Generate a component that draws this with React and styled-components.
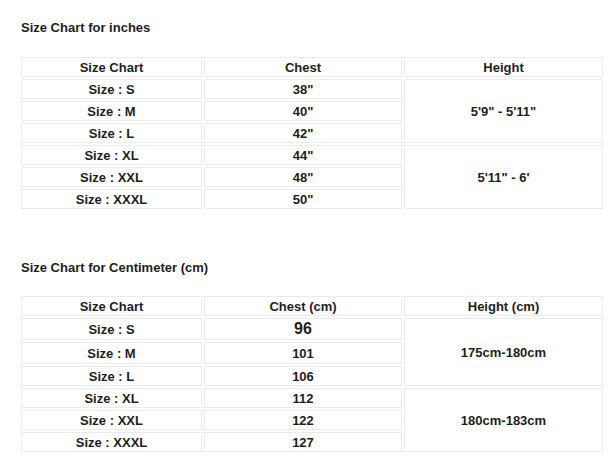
import React from "react";
import styled, { createGlobalStyle } from "styled-components";

const Global = createGlobalStyle`
  html, body { margin: 0; padding: 0; background: #fff; }
  body { font-family: "Liberation Sans", Arial, sans-serif; color: #1e1e1e; }
`;

const Page = styled.div`
  padding: 20px 0 0 21px;
  display: flex;
  flex-direction: column;
`;

const Section = styled.section`
  display: flex;
  flex-direction: column;
  margin-bottom: ${(p) => p.$mb || 0}px;
`;

const Title = styled.h2`
  margin: 0 0 ${(p) => p.$gap}px 0;
  font-size: 13px;
  font-weight: bold;
  line-height: 16px;
  color: #1e1e1e;
`;

const Table = styled.div`
  display: grid;
  grid-template-columns: 181px 198px 199px;
  grid-auto-rows: 20px;
  gap: 2px;
  width: max-content;
`;

const Cell = styled.div`
  border: 1px solid #ebebeb;
  display: flex;
  align-items: center;
  justify-content: center;
  font-size: ${(p) => p.$size || 13}px;
  font-weight: bold;
  line-height: 1;
  color: #1e1e1e;
  box-sizing: border-box;
  grid-row: ${(p) => (p.$span ? `span ${p.$span}` : "auto")};
`;

function SizeTable({ headers, rows, groups, tallFirst }) {
  return (
    <Table style={tallFirst ? { gridTemplateRows: "20px 22px 22px" } : undefined}>
      {headers.map((h) => (
        <Cell key={h}>{h}</Cell>
      ))}
      {rows.map((r, i) => (
        <React.Fragment key={r.size}>
          <Cell>{r.size}</Cell>
          <Cell $size={r.big ? 16 : 13}>{r.chest}</Cell>
          {i % 3 === 0 && <Cell $span={3}>{groups[i / 3]}</Cell>}
        </React.Fragment>
      ))}
    </Table>
  );
}

const inchRows = [
  { size: "Size : S", chest: '38"' },
  { size: "Size : M", chest: '40"' },
  { size: "Size : L", chest: '42"' },
  { size: "Size : XL", chest: '44"' },
  { size: "Size : XXL", chest: '48"' },
  { size: "Size : XXXL", chest: '50"' },
];

const cmRows = [
  { size: "Size : S", chest: "96", big: true },
  { size: "Size : M", chest: "101" },
  { size: "Size : L", chest: "106" },
  { size: "Size : XL", chest: "112" },
  { size: "Size : XXL", chest: "122" },
  { size: "Size : XXXL", chest: "127" },
];

export default function App() {
  return (
    <>
      <Global />
      <Page>
        <Section $mb={51}>
          <Title $gap={21}>Size Chart for inches</Title>
          <SizeTable
            headers={["Size Chart", "Chest", "Height"]}
            rows={inchRows}
            groups={['5\'9" - 5\'11"', '5\'11" - 6\'']}
          />
        </Section>
        <Section>
          <Title $gap={20}>Size Chart for Centimeter (cm)</Title>
          <SizeTable
            headers={["Size Chart", "Chest (cm)", "Height (cm)"]}
            rows={cmRows}
            groups={["175cm-180cm", "180cm-183cm"]}
            tallFirst
          />
        </Section>
      </Page>
    </>
  );
}
